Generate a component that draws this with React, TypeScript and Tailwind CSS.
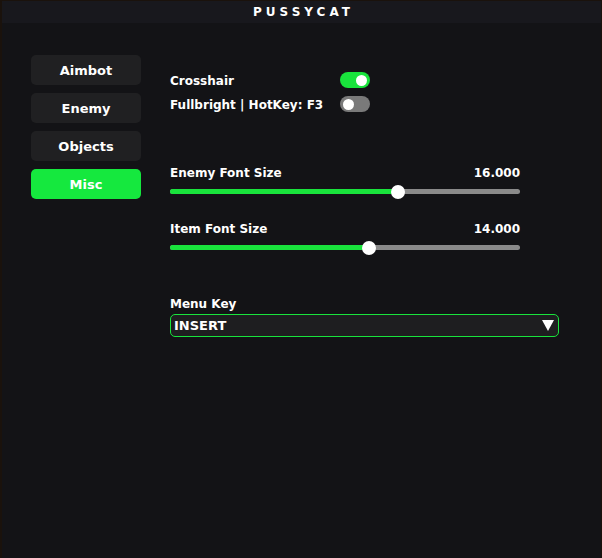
import { useState } from 'react';

const tabs = ['Aimbot', 'Enemy', 'Objects', 'Misc'];

const Toggle = ({ on }: { on: boolean }) => (
    <div
        className={`w-[30px] h-[16px] rounded-full flex items-center px-[3px] ${
            on ? 'bg-[#19e33c] justify-end' : 'bg-[#7a7a7a] justify-start'
        }`}
    >
        <div className="w-[11px] h-[11px] rounded-full bg-white" />
    </div>
);

const Slider = ({ label, value, pct }: { label: string; value: string; pct: number }) => (
    <div className="flex flex-col">
        <div className="flex justify-between items-center h-[16px] pt-[2px]">
            <span>{label}</span>
            <span>{value}</span>
        </div>
        <div className="relative mt-[9px] h-[5px] rounded-full bg-[#8a8a8a]">
            <div className="h-full rounded-full bg-[#19e33c]" style={{ width: `${pct}%` }} />
            <div
                className="absolute top-1/2 w-[14px] h-[14px] -mt-[7px] -ml-[7px] rounded-full bg-white"
                style={{ left: `${pct}%` }}
            />
        </div>
    </div>
);

const App = () => {
    const [active, setActive] = useState('Misc');

    return (
        <div className="w-[602px] h-[558px] bg-[#1a120c] pl-[2px] pt-[1px] pr-[1px] font-['DejaVu_Sans',sans-serif] font-bold text-[12px] text-white">
            <div className="w-full h-full bg-[#131316] flex flex-col">
                <div className="h-[22px] bg-[#18181d] flex items-center justify-center text-[12px] tracking-[4px] pl-[4px]">
                    PUSSYCAT
                </div>
                <div className="flex pt-[32px]">
                    <div className="w-[110px] ml-[29px] flex flex-col gap-[8px]">
                        {tabs.map((t) => (
                            <div
                                key={t}
                                onClick={() => setActive(t)}
                                className={`h-[30px] pt-[2px] rounded-[5px] flex items-center justify-center text-[13px] cursor-pointer ${
                                    active === t ? 'bg-[#15e83e]' : 'bg-[#202022]'
                                }`}
                            >
                                {t}
                            </div>
                        ))}
                    </div>
                    <div className="ml-[29px] w-[389px] flex flex-col pt-[17px]">
                        <div className="flex flex-col gap-[8px] w-[200px]">
                            <div className="flex items-center justify-between h-[16px]">
                                <span className="pt-[2px]">Crosshair</span>
                                <Toggle on />
                            </div>
                            <div className="flex items-center justify-between h-[16px]">
                                <span className="pt-[2px]">Fullbright | HotKey: F3</span>
                                <Toggle on={false} />
                            </div>
                        </div>
                        <div className="w-[350px] mt-[52px] flex flex-col gap-[26px]">
                            <Slider label="Enemy Font Size" value="16.000" pct={65.1} />
                            <Slider label="Item Font Size" value="14.000" pct={56.9} />
                        </div>
                        <div className="mt-[45px] h-[16px] pt-[2px] flex items-center">Menu Key</div>
                        <div className="mt-[3px] h-[23px] rounded-[5px] border border-[#19e33c] bg-[#1e1e20] flex items-center justify-between pl-[3px] pr-[4px] text-[13px]">
                            <span className="pt-[1px]">INSERT</span>
                            <svg width="12" height="11" viewBox="0 0 12 11">
                                <path d="M0 0 L12 0 L6 11 Z" fill="white" />
                            </svg>
                        </div>
                    </div>
                </div>
            </div>
        </div>
    );
};

export default App;
